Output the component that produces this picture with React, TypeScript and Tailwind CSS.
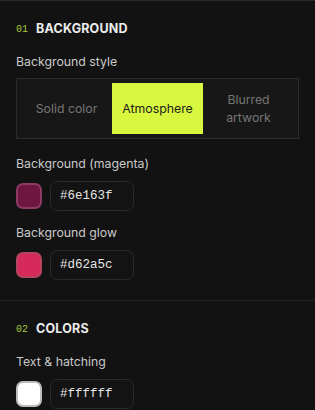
import { useState } from "react";

const sans = "font-['Inter','Noto_Sans',sans-serif]";
const mono = "font-['Liberation_Mono','DejaVu_Sans_Mono',monospace]";

function SectionHeading({ num, title }: { num: string; title: string }) {
  return (
    <div className="flex items-center gap-[8px] h-4 mb-[17px]">
      <span className={`${mono} text-[10px] text-[#a9c83c]`}>{num}</span>
      <span className="text-[12.5px] font-bold tracking-[0.2px] text-[#ececec]">{title}</span>
    </div>
  );
}

function ColorField({
  label,
  value,
  swatch,
  ring,
}: {
  label: string;
  value: string;
  swatch: string;
  ring: string;
}) {
  return (
    <div>
      <div className="text-[12.3px] leading-4 text-[#c9c9c9] mb-[9px]">{label}</div>
      <div className="flex items-center gap-2">
        <div
          className="w-[26px] h-[26px] rounded-[7px] border-2"
          style={{ background: swatch, borderColor: ring }}
        />
        <div className="w-[84px] h-[30px] rounded-[7px] border border-[#2a2a2a] bg-[#131313] flex items-center px-[9px]">
          <span className={`${mono} text-[12.5px] text-[#e6e6e6]`}>{value}</span>
        </div>
      </div>
    </div>
  );
}

export default function App() {
  const [style, setStyle] = useState("atmosphere");
  const options = [
    { id: "solid", label: "Solid color" },
    { id: "atmosphere", label: "Atmosphere" },
    { id: "blurred", label: "Blurred artwork" },
  ];

  return (
    <div className={`${sans} w-[315px] h-[410px] bg-[#121212] border-t border-[#292929] overflow-hidden`}>
      <section className="px-4 pt-5 pb-5 border-b border-[#262626]">
        <SectionHeading num="01" title="BACKGROUND" />

        <div className="text-[12.3px] leading-4 text-[#c9c9c9] mb-2">Background style</div>
        <div className="grid grid-cols-3 p-1 border border-[#2c2c2c] bg-[#171717] h-[61px] mb-[17px]">
          {options.map((o) => (
            <button
              key={o.id}
              onClick={() => setStyle(o.id)}
              className={`px-2 text-[12.3px] leading-[18px] text-center ${
                style === o.id ? "bg-[#d9f73e] text-[#1c1c1c]" : "text-[#767676]"
              }`}
            >
              {o.label}
            </button>
          ))}
        </div>

        <div className="flex flex-col gap-[14px]">
          <ColorField label="Background (magenta)" value="#6e163f" swatch="#6e163f" ring="#8f3a62" />
          <ColorField label="Background glow" value="#d62a5c" swatch="#d62a5c" ring="#b5455f" />
        </div>
      </section>

      <section className="px-4 pt-5">
        <SectionHeading num="02" title="COLORS" />
        <ColorField label="Text & hatching" value="#ffffff" swatch="#ffffff" ring="#bdbdbd" />
      </section>
    </div>
  );
}
